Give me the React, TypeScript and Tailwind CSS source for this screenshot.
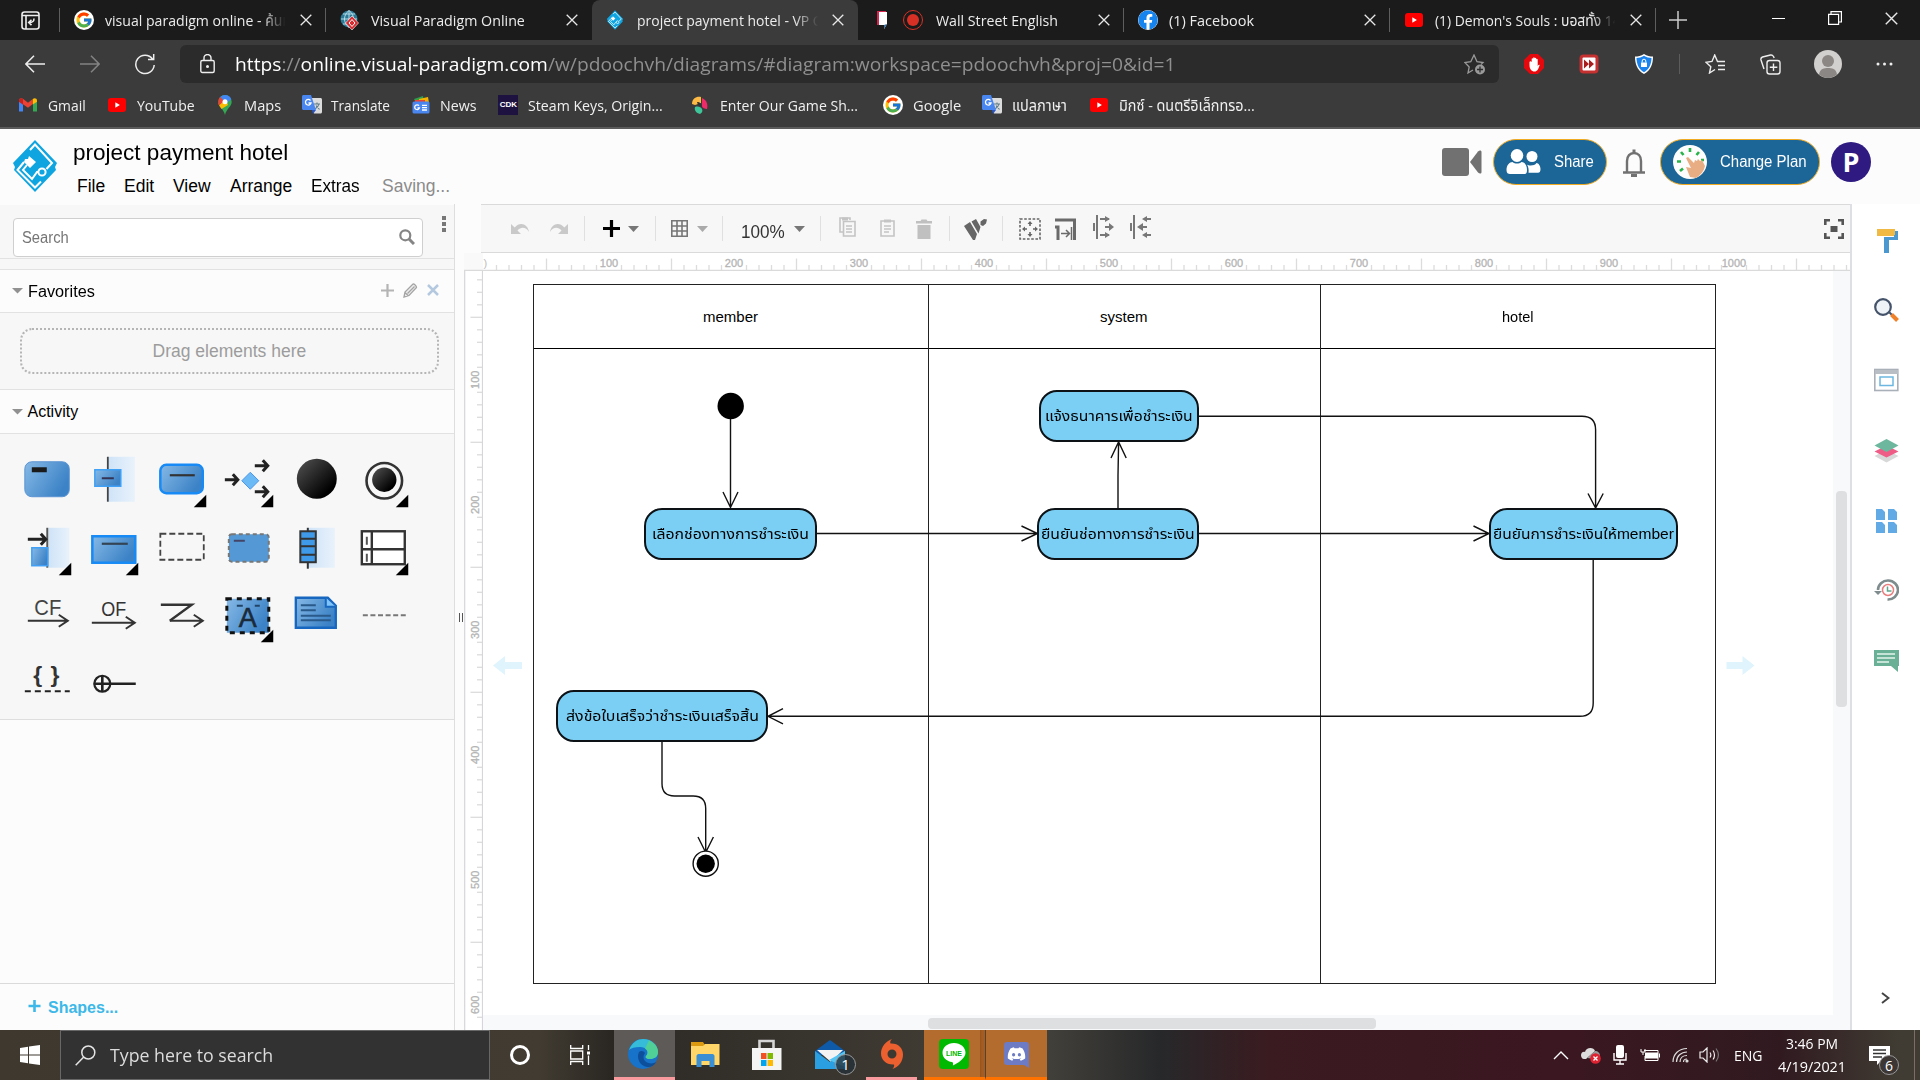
import { useLayoutEffect, useRef, useState, type ReactNode } from 'react';
import { FcGoogle } from 'react-icons/fc';
import { FaFacebook, FaDiscord } from 'react-icons/fa';

const ui = "font-['Open_Sans','Noto_Sans_Thai','Noto_Sans',sans-serif]";
const arial = "font-['Liberation_Sans','Noto_Sans_Thai',sans-serif]";

/* One line of text condensed or widened to fill a given width. */
function Label({ w, className = '', children }: { w: number; className?: string; children: ReactNode }) {
  const ref = useRef<HTMLSpanElement>(null);
  const [scale, setScale] = useState(1);
  useLayoutEffect(() => {
    if (ref.current) setScale(w / ref.current.offsetWidth);
  }, [w]);
  return (
    <span className={'block shrink-0 whitespace-nowrap ' + className} style={{ width: w }}>
      <span ref={ref} className="inline-block origin-left whitespace-pre" style={{ transform: `scaleX(${scale})` }}>
        {children}
      </span>
    </span>
  );
}

/* ---------- small brand marks ---------- */

const GoogleMark = () => (
  <span className="flex size-5 items-center justify-center rounded-full bg-white"><FcGoogle size={18} /></span>
);

const YouTubeMark = () => (
  <svg width="20" height="20" viewBox="0 0 20 20">
    <rect x="1" y="3" width="18" height="14" rx="3" fill="#f00" />
    <path d="M8.3 7.2v5.6l4.6-2.8z" fill="#fff" />
  </svg>
);

const GmailMark = () => (
  <svg width="20" height="20" viewBox="0 0 20 20">
    <path d="M1 5v11.5h4V9z" fill="#4285f4" />
    <path d="M19 5v11.5h-4V9z" fill="#34a853" />
    <path d="M1 5.5C1 3 4 2.500 5.200 4L10 7.700 14.800 4v5L10 12.700 1 6.500z" fill="#ea4335" />
    <path d="M14.800 4C16.500 2.500 19 3.500 19 5.500v1.300L14.800 9.500z" fill="#fbbc04" />
    <path d="M1 5.500v1.300L5 9.700V4C3.500 2.700 1 3.500 1 5.500z" fill="#c5221f" />
  </svg>
);

const MapsMark = () => (
  <svg width="20" height="22" viewBox="0 0 20 22">
    <path d="M10 1a6.700 6.700 0 0 0-6.700 6.700c0 4.800 5.200 7 6.700 13.300 1.500-6.300 6.700-8.500 6.700-13.300A6.700 6.700 0 0 0 10 1z" fill="#34a853" />
    <path d="M3.600 9.500 10 3l3 8-6.500 4C5 13 4 11.500 3.600 9.500z" fill="#fbbc04" />
    <path d="M10 1a6.700 6.700 0 0 1 6.200 4.200L11 10 5.200 3A6.700 6.700 0 0 1 10 1z" fill="#4285f4" />
    <path d="M5.200 3 9 7l-5 4.500C3 9 3 5 5.200 3z" fill="#ea4335" />
    <circle cx="10" cy="7.700" r="2.500" fill="#fff" />
  </svg>
);

const TranslateMark = () => (
  <svg width="20" height="21" viewBox="0 0 20 21">
    <path d="M8 4h10.500c.8 0 1.500.7 1.500 1.500V18c0 .8-.7 1.500-1.500 1.500H12z" fill="#dcdcdc" />
    <path d="M12 10h6M15 8.500V10M17 10c-.5 2.500-2.500 4-4 5M14 11.500l3.500 4" stroke="#5f7c8a" strokeWidth="1.100" fill="none" />
    <path d="M1.500 1H9l5 15H1.500C.7 16 0 15.300 0 14.500v-12C0 1.700.7 1 1.500 1z" fill="#4a86f0" />
    <path d="M10 16h4l-3 4z" fill="#2a56c6" />
    <path d="M8.500 6.500A2.800 2.800 0 1 0 9 9H6.500" stroke="#fff" strokeWidth="1.300" fill="none" />
  </svg>
);

const NewsMark = () => (
  <svg width="20" height="20" viewBox="0 0 20 20">
    <path d="M3 4 12 1l1 5H4z" fill="#2e9e4f" />
    <path d="M8 4 17 2l1 6H8z" fill="#f4b400" />
    <path d="M4 5h10v5H4z" fill="#ea4335" />
    <rect x="1.500" y="6.500" width="17" height="12" rx="1.500" fill="#4a86f0" />
    <path d="M8 10.700a2.400 2.400 0 1 0 .4 2.200H6.500M11 10.300h5M11 12.700h5M11 15h5" stroke="#fff" strokeWidth="1.300" fill="none" />
  </svg>
);

const CdkMark = () => (
  <span className="flex size-5 items-center justify-center bg-[#1e1340] font-['Liberation_Sans',sans-serif] text-[8px] font-bold text-white">CDK</span>
);

const GameMark = () => (
  <svg width="20" height="20" viewBox="0 0 20 20">
    <path d="M2 9c0-6 5-8 9-7v6L5 10z" fill="#fdbb45" />
    <path d="M12 3c5 2 6 7 5 11-2 0-5-1-5-3z" fill="#ee2a6a" />
    <path d="M5 12c3-1 6 0 7 2s0 4-2 5c-4-1-6-4-5-7z" fill="#3fc59a" />
    <path d="M7 7c3 0 5 2 5 5l-4-2z" fill="#333" />
  </svg>
);

function VpDiamond({ w, h }: { w: number; h: number }) {
  return (
    <svg width={w} height={h} viewBox="0 0 46 54">
      <path d="M23 1 45 24l-2 4 1 3L23 53 2 31l1-3-2-4z" fill="#0fa5e0" />
      <path d="M18 11 23 5.500 40 24l-5.500 6" stroke="#fff" strokeWidth="2" fill="none" />
      <path d="M12 23 5.500 31 23 48.500 29 42.500M15 26l-4 5 9 9 5-7h3" stroke="#fff" strokeWidth="2" fill="none" />
      <path d="m17 17 7 6-6 6-6-6 1-3h3z" fill="#fff" />
      <circle cx="30" cy="33" r="3.600" fill="#0fa5e0" stroke="#fff" strokeWidth="2" />
    </svg>
  );
}

const GlobeMark = () => (
  <svg width="20" height="20" viewBox="0 0 20 20">
    <circle cx="9" cy="9" r="8.500" fill="#2c7a96" />
    <path d="M1 9h16M9 .5v17M3 4h12M3 14h12M9 .5C3 5 3 13 9 17.500M9 .5c6 4.500 6 12.500 0 17" stroke="#bfe3ee" strokeWidth=".9" fill="none" />
    <path d="m12 6 6.500 7L12 20l-6.500-7z" fill="#d52a2f" stroke="#fff" strokeWidth=".6" />
    <path d="m12 9.500 3 3.500-3 3.500L9 13z" stroke="#fff" fill="none" />
  </svg>
);

/* ---------- browser chrome ---------- */

const Cross = ({ s = 12 }: { s?: number }) => (
  <svg width={s} height={s} viewBox="0 0 12 12"><path d="m.7.7 10.600 10.600M11.300.7.7 11.300" stroke="#e8e8e8" strokeWidth="1.300" /></svg>
);

type TabProps = { icon: ReactNode; title: string; w: number; active?: boolean; divider?: boolean; fade?: boolean };

function Tab({ icon, title, w, active, divider, fade }: TabProps) {
  return (
    <div className={'relative flex h-10 w-[266px] shrink-0 items-center pl-3.5 ' + (active ? 'rounded-t-lg bg-[#3b3b3b]' : '')}>
      <span className="flex h-5 min-w-5 shrink-0 items-center">{icon}</span>
      <span className="ml-[11px] flex-1 overflow-hidden">
        <Label w={w} className={'text-[15px] leading-[39px] text-[#ececec] ' + (fade ? '[mask-image:linear-gradient(90deg,#000_84%,transparent_97%)]' : '')}>{title}</Label>
      </span>
      <span className="mr-3.5 shrink-0"><Cross /></span>
      {divider && <span className="absolute top-2 right-0 h-6 w-px bg-[#5e5e5e]" />}
    </div>
  );
}

function TabStrip() {
  return (
    <div className="flex h-10 bg-[#1b1b1b]">
      <div className="flex w-[60px] items-center pl-[21px]">
        <svg width="19" height="19" viewBox="0 0 19 19" fill="none" stroke="#eee" strokeWidth="1.600">
          <rect x="1" y="1" width="17" height="17" rx="2.500" /><path d="M1 4.500h17M5 4.500V18M13 7.500c0 3-1 4-5 4M10.500 8.700 7.700 11.500l2.800 2.600" />
        </svg>
      </div>
      <span className="mt-2 -ml-px h-6 w-px bg-[#5e5e5e]" />
      <Tab icon={<GoogleMark />} title="visual paradigm online - ค้นห" w={186} divider fade />
      <Tab icon={<GlobeMark />} title="Visual Paradigm Online" w={154} />
      <Tab icon={<VpDiamond w={18} h={20} />} title="project payment hotel - VP O" w={187} active fade />
      <Tab
        icon={
          <span className="flex w-[53px] items-center justify-between pr-0.5 pl-1">
            <svg width="12" height="20" viewBox="0 0 12 20"><path d="M1 1h9v14H1z" fill="#d6264f" /><path d="M3 2h8v12l-3 5v-4H3z" fill="#fff" /><path d="m8 15 3-1-3 5z" fill="#3b6fa0" /></svg>
            <span className="flex size-5 items-center justify-center rounded-full border-[1.500px] border-[#d93025]"><span className="size-3 rounded-full bg-[#d93025]" /></span>
          </span>
        }
        title="Wall Street English" w={122} divider
      />
      <Tab icon={<FaFacebook size={20} className="rounded-full bg-white text-[#1584ee]" />} title="(1) Facebook" w={85} divider />
      <Tab icon={<YouTubeMark />} title="(1) Demon's Souls : บอสทั้ง 14" w={186} divider fade />
      <svg className="mt-[11px] ml-[13px]" width="18" height="18" viewBox="0 0 18 18"><path d="M9 0v18M0 9h18" stroke="#ccc" strokeWidth="1.500" /></svg>
      <div className="ml-auto flex items-center gap-[43px] pr-[22px] pb-1">
        <span className="h-px w-[13px] bg-white" />
        <svg width="14" height="14" viewBox="0 0 14 14" fill="none" stroke="#fff" strokeWidth="1.200"><path d="M.6 3.400h10v10h-10zM3 3V.6h10.400V11H11" /></svg>
        <Cross s={13} />
      </div>
    </div>
  );
}

function AddressRow() {
  return (
    <div className="flex h-12 items-center pr-[27px]">
      <div className="flex w-[180px] items-center pl-[25px]">
        <svg width="20" height="18" viewBox="0 0 20 18" fill="none" stroke="#eee" strokeWidth="1.500"><path d="M20 9H1M9 .7.9 9 9 17.300" /></svg>
        <svg className="ml-[35px]" width="20" height="18" viewBox="0 0 20 18" fill="none" stroke="#838383" strokeWidth="1.500"><path d="M0 9h19M11 .7 19.100 9 11 17.300" /></svg>
        <svg className="ml-[35px]" width="20" height="21" viewBox="0 0 20 21" fill="none" stroke="#eee" strokeWidth="1.500"><path d="M17.500 5A9.200 9.200 0 1 0 19.200 11M18.700 0v5.500H13" /></svg>
      </div>
      <div className="flex h-[38px] w-[1319px] items-center rounded-md bg-[#2b2b2b] pr-[13px] pl-5">
        <svg width="15" height="20" viewBox="0 0 15 20" fill="none" stroke="#eee" strokeWidth="1.400"><rect x=".8" y="6.500" width="13.400" height="12" rx="1.500" /><path d="M4 6.500V4a3.500 3.500 0 0 1 7 0v2.500" /><circle cx="7.500" cy="12.500" r=".8" fill="#eee" /></svg>
        <Label w={941} className="ml-5 text-[19px] leading-[38px] text-[#8f8f8f]">
          <span className="text-white">https</span>://<span className="text-white">online.visual-paradigm.com</span>/w/pdoochvh/diagrams/#diagram:workspace=pdoochvh&amp;proj=0&amp;id=1
        </Label>
        <svg className="ml-auto" width="22" height="21" viewBox="0 0 22 21" fill="none" stroke="#9a9a9a" strokeWidth="1.300"><path d="M9 16 4 19l1.200-6L.8 8.500l6-.8L10 1l3 6.700 6 .8-2 2" /><circle cx="16" cy="15.500" r="5" fill="#9a9a9a" stroke="none" /><path d="M16 12.500v6M13 15.500h6" stroke="#2b2b2b" /></svg>
      </div>
      <div className="ml-[25px] flex items-center">
        <svg width="20" height="20" viewBox="0 0 20 20"><path d="M6 0h8l6 6v8l-6 6H6l-6-6V6z" fill="#e5090d" /><path d="M5.500 8v3c0 4 2 6.500 5 6.500 3 0 3.700-2.500 4.500-4.500l.7-2c-.7-.5-1.300 0-2 1V5.500c-.5-1-1.200-.8-1.500 0V4.300c-.5-.8-1.200-.8-1.500 0v-.5c-.5-.8-1.200-.8-1.500 0v1C8.700 4 8 4 7.700 4.800V8c-.7-1-1.800-1-2.200 0z" fill="#fff" /></svg>
        <svg className="ml-[35px]" width="20" height="20" viewBox="0 0 20 20"><rect x=".5" y=".5" width="19" height="19" rx="4" fill="#c53030" /><rect x="3.500" y="3.500" width="13" height="13" rx="1" fill="#fff" /><path d="M5 5.500 10 10l-5 4.500zm5 0 5 4.500-5 4.500z" fill="#a81d1d" /></svg>
        <svg className="ml-[35px]" width="20" height="20" viewBox="0 0 20 20"><path d="M10 0c3 2 6 2.500 9 2.500C19 10 17 16 10 20 3 16 1 10 1 2.500 4 2.500 7 2 10 0z" fill="#fff" /><path d="M10 1.700c2.500 1.500 5 2.200 7.500 2.300-.2 6-2 11-7.500 14.300C4.500 15 2.700 10 2.500 4 5 3.900 7.500 3.200 10 1.700z" fill="#1b83ee" /><rect x="7" y="8.500" width="6" height="4.500" fill="#fff" /><path d="M8.200 8.500V7a1.800 1.800 0 0 1 3.600 0v1.500" stroke="#fff" fill="none" /></svg>
        <span className="ml-[25px] h-5 w-px bg-[#5c5c5c]" />
        <svg className="ml-[25px]" width="21" height="20" viewBox="0 0 21 20" fill="none" stroke="#eee" strokeWidth="1.400"><path d="M10 15.500 4.500 19l1.300-6.300L1 8.200l6-.8L9.700 1l2.800 6.500H20M13 11.500h7M13 15.500h7" /></svg>
        <svg className="ml-[34px]" width="21" height="21" viewBox="0 0 21 21" fill="none" stroke="#eee" strokeWidth="1.400"><rect x="7" y="6.500" width="13" height="13.500" rx="2.500" /><path d="M13.500 9.500v7.500M9.800 13.200h7.500M4 15 1 6c-.4-1.500.3-2.500 1.500-3l8-2c1.500-.3 2.300.3 3 1.500l.7 1.500" /></svg>
        <svg className="ml-[33px]" width="28" height="28" viewBox="0 0 28 28"><circle cx="14" cy="14" r="14" fill="#d2d0ce" /><circle cx="14" cy="11" r="6" fill="#8a8784" /><path d="M5 24.500C6 18.500 10 18 14 18s8 .5 9 6.500c-5 4.500-13 4.500-18 0z" fill="#8a8784" /></svg>
        <svg className="ml-[34px]" width="17" height="4" viewBox="0 0 17 4" fill="#eee"><circle cx="2" cy="2" r="1.500" /><circle cx="8.500" cy="2" r="1.500" /><circle cx="15" cy="2" r="1.500" /></svg>
      </div>
    </div>
  );
}

const bookmarks: { icon: ReactNode; text: string; w: number; slot: string }[] = [
  { icon: <GmailMark />, text: 'Gmail', w: 38, slot: 'w-[38px]' },
  { icon: <YouTubeMark />, text: 'YouTube', w: 58, slot: 'w-[57px]' },
  { icon: <MapsMark />, text: 'Maps', w: 37, slot: 'w-[36px]' },
  { icon: <TranslateMark />, text: 'Translate', w: 59, slot: 'w-[58px]' },
  { icon: <NewsMark />, text: 'News', w: 37, slot: 'w-[37px]' },
  { icon: <CdkMark />, text: 'Steam Keys, Origin...', w: 135, slot: 'w-[141px]' },
  { icon: <GameMark />, text: 'Enter Our Game Sh...', w: 138, slot: 'w-[142px]' },
  { icon: <GoogleMark />, text: 'Google', w: 48, slot: 'w-[48px]' },
  { icon: <TranslateMark />, text: 'แปลภาษา', w: 55, slot: 'w-[56px]' },
  { icon: <YouTubeMark />, text: 'มิกซ์ - ดนตรีอิเล็กทรอ...', w: 136, slot: 'w-[136px]' },
];

function BookmarkBar() {
  return (
    <div className="flex h-[39px] items-center gap-[21.200px] pb-1.5 pl-[18px]">
      {bookmarks.map((b, i) => (
        <div key={i} className="flex items-center gap-[9.700px]">
          <span className="flex w-5 justify-center">{b.icon}</span>
          <div className={b.slot}><Label w={b.w} className="text-[15px] leading-5 text-[#f0f0f0]">{b.text}</Label></div>
        </div>
      ))}
    </div>
  );
}

/* ---------- application header ---------- */

const menu = [
  { t: 'File', w: 28 }, { t: 'Edit', w: 30 }, { t: 'View', w: 38 }, { t: 'Arrange', w: 62 }, { t: 'Extras', w: 49 },
];

function AppHeader() {
  return (
    <header className={'flex h-[75px] bg-[#fcfcfc] ' + arial}>
      <div className="pt-2.5 pl-3"><VpDiamond w={46} h={54} /></div>
      <div className="ml-[14.500px] flex flex-col">
        <Label w={215} className="mt-[9px] text-[22px] leading-[30px] text-black">project payment hotel</Label>
        <div className="mt-1.5 flex gap-[19px] pl-[4.500px] text-[17.500px] leading-6 text-black">
          {menu.map((m) => <Label key={m.t} w={m.w}>{m.t}</Label>)}
          <Label w={68} className="ml-[3px] text-[#8b8b8b]">Saving...</Label>
        </div>
      </div>
      <div className="ml-auto flex h-[66px] items-center pr-[49px] text-base text-white">
        <svg width="40" height="28" viewBox="0 0 40 28" fill="#717171"><rect x="0" y="0" width="27" height="28" rx="3" /><path d="m28 14 8-10.500c1.500-1.500 3.500-1.500 3.500.5v20c0 2-2 2-3.500.5z" /></svg>
        <div className="ml-[11px] flex h-[46px] w-[114px] items-center rounded-full border border-[#f0ab23] bg-[#1b6597] pl-3">
          <svg width="35" height="26" viewBox="0 0 35 26" fill="#fff"><ellipse cx="11" cy="6.500" rx="6.300" ry="6.500" /><path d="M.5 21c0-5 3-8 6-8 2.500 2 6.500 2 9 0 3 0 5.500 3 5.500 8 0 4-1.500 4-3 4H4c-2 0-3.500-1-3.500-4z" /><circle cx="26" cy="7.500" r="5.500" /><path d="M21 15.500c2 1.500 7.500 1.500 9.500-1.500 2 0 4 3 4 6 0 3-1 3.700-2.500 3.700H22.500c.5-3-.2-6-1.500-8.200z" /></svg>
          <Label w={40} className="ml-[13px]">Share</Label>
        </div>
        <svg className="ml-[15px]" width="24" height="29" viewBox="0 0 24 29" fill="none" stroke="#717171" strokeWidth="2.400"><path d="M5 24V13c0-5 3-8 7-8s7 3 7 8v11M1 24.500h22" /><path d="M10.500 3h3M9 27.500h6" strokeWidth="3" /></svg>
        <div className="ml-3.5 flex h-[46px] w-40 items-center rounded-full border border-[#f0ab23] bg-[#1b6597] pl-3">
          <svg width="34" height="34" viewBox="0 0 34 34"><circle cx="17" cy="17" r="17" fill="#fdfdfd" /><g stroke="#27b24a" strokeWidth="2.600"><path d="M17 3v4M8 7l2.500 3M26 7l-2.500 3M4 16.500h4M7 26l3-2.500M28 15h3" /></g><path d="m13 13 2-1 6 6 1-3 2 1 1-2 2 2 2-1 3 6c-1 5-4 9-9 12l-6-1-4-10 5 1z" fill="#e9ad83" /></svg>
          <Label w={87} className="ml-[12.500px]">Change Plan</Label>
        </div>
        <div className="ml-[11px] flex size-10 items-center justify-center rounded-full bg-[#2e1a80] font-['Open_Sans',sans-serif] text-[27px] font-bold">P</div>
      </div>
    </header>
  );
}

/* ---------- shape palette ---------- */

const Arrow = ({ x1, x2, y }: { x1: number; x2: number; y: number }) => (
  <path d={`M${x1} ${y}H${x2 - 1}M${x2 - 6} ${y - 5.5}l5 5.500-5 5.500`} stroke="#222" strokeWidth="3" fill="none" />
);
const ThinArrow = ({ x1, x2, y }: { x1: number; x2: number; y: number }) => (
  <path d={`M${x1} ${y}H${x2}M${x2 - 9} ${y - 6}l9 6-9 6`} stroke="#333" strokeWidth="2" fill="none" />
);

const shapes: { more?: boolean; art: ReactNode }[] = [
  { art: <><rect x="-22" y="-18" width="44.500" height="35" rx="7" fill="url(#blue)" stroke="#5a94d2" /><path d="M-15-10H0" stroke="#1a1a1a" strokeWidth="5" /></> },
  { art: <><rect x="-6" y="-23" width="27" height="45" fill="url(#pale)" /><path d="M-6-23v45" stroke="#444" strokeWidth="1.800" /><rect x="-19" y="-10" width="26" height="16.500" fill="url(#blue)" stroke="#3fa0f5" strokeWidth="1.500" /><path d="M-12-1.500H0" stroke="#335" strokeWidth="2" /></> },
  { more: true, art: <><rect x="-21.500" y="-15" width="42.500" height="28.500" rx="6" fill="url(#blue)" stroke="#178af5" strokeWidth="2.500" /><path d="M-12-4.500h25" stroke="#333" strokeWidth="2.200" /></> },
  { more: true, art: <><Arrow x1={-24} x2={-10} y={0} /><Arrow x1={6} x2={20} y={-14} /><Arrow x1={6} x2={20} y={12} /><path d="m1.500-7.500 8.500 8.500-8.500 8.500L-7 1z" fill="#6cbaf5" stroke="#4a94e8" /></> },
  { art: <circle cx="0" cy="-1" r="20" fill="url(#ball)" /> },
  { more: true, art: <><circle cx=".5" cy="1" r="17.800" fill="#f7f7f7" stroke="#333" strokeWidth="2.600" /><circle cx=".5" cy="0" r="12.200" fill="url(#ball)" /></> },
  { more: true, art: <><rect x="2" y="-20" width="20.500" height="40" fill="url(#pale)" /><path d="M.5-20v40" stroke="#555" strokeWidth="2" /><rect x="-15" y="0" width="16" height="18" fill="url(#blue)" stroke="#3fa0f5" strokeWidth="1.500" /><Arrow x1={-19} x2={0} y={-8.500} /></> },
  { more: true, art: <><rect x="-21.500" y="-11.500" width="43" height="26.500" fill="url(#blue)" stroke="#178af5" strokeWidth="2.500" /><path d="M-12-4h26" stroke="#345" strokeWidth="2.200" /></> },
  { art: <rect x="-21.500" y="-14" width="43.500" height="26" fill="none" stroke="#444" strokeWidth="1.800" strokeDasharray="6 3" /> },
  { art: <><rect x="-20" y="-13.500" width="40" height="27.500" rx="3" fill="#5499d5" stroke="#777" strokeWidth="2" strokeDasharray="4 3" /><path d="M-15-7h11" stroke="#446" strokeWidth="2" /></> },
  { art: <><rect x="-9" y="-20" width="27" height="40" fill="url(#pale)" /><path d="M-9-20v41" stroke="#333" strokeWidth="2" /><rect x="-16.500" y="-16.500" width="15.500" height="31" fill="#3f9bea" stroke="#333" strokeWidth="2" /><path d="M-16-9h15M-16-1.500h15M-16 7h15" stroke="#333" strokeWidth="1.800" /></> },
  { more: true, art: <><rect x="-22" y="-16.500" width="43" height="33" fill="#fff" stroke="#333" strokeWidth="2.400" /><path d="M-22 1.500h43M-12-16v33" stroke="#333" strokeWidth="2.400" /><path d="M-17-11v8M-17 6v8" stroke="#555" strokeWidth="2" /></> },
  { art: <><text x="1" y="0" textAnchor="middle" fontSize="22" textLength="27" lengthAdjust="spacingAndGlyphs" fontFamily="Liberation Sans" fill="#444">CF</text><ThinArrow x1={-19} x2={21} y={6} /></> },
  { art: <><text x="0" y="1" textAnchor="middle" fontSize="20" textLength="25" lengthAdjust="spacingAndGlyphs" fontFamily="Liberation Sans" fill="#333">OF</text><ThinArrow x1={-22} x2={21} y={8} /></> },
  { art: <><path d="M-21-10h31L-12 6" stroke="#333" strokeWidth="2.400" fill="none" /><ThinArrow x1={-12} x2={21} y={6} /></> },
  { more: true, art: <><rect x="-22" y="-16" width="42" height="34" fill="url(#blue)" stroke="#111" strokeWidth="3" strokeDasharray="5 5" /><path d="M-12-9h6M6-9h5" stroke="#246" strokeWidth="2" /><text x="-1" y="12" textAnchor="middle" fontSize="27" fontFamily="Liberation Sans" fill="#1a2a3a" stroke="#1a2a3a" strokeWidth=".6">A</text></> },
  { art: <><path d="M-21-17H11l8 8v22h-40z" fill="url(#blue)" stroke="#1767c0" strokeWidth="2.400" /><path d="M9-17v9h10" stroke="#1767c0" strokeWidth="2" fill="#7fc4fa" /><path d="M-16-9.500H-1M-16-4.500H-1M-16 1h30M-16 5.500h30" stroke="#2a5a8a" strokeWidth="1.800" /></> },
  { art: <path d="M-21 .5h43" stroke="#777" strokeWidth="1.800" strokeDasharray="5 2.600" /> },
  { art: <><text x="0" y="-1" textAnchor="middle" fontSize="23" fontFamily="Liberation Sans" fontWeight="bold" fill="#333" letterSpacing="1">{'{ }'}</text><path d="M-22 8.500h45" stroke="#222" strokeWidth="2.200" strokeDasharray="6 4" /></> },
  { art: <><circle cx="-11.500" cy="1" r="8" fill="none" stroke="#222" strokeWidth="2.200" /><path d="M-20 1h42M-11.500-7v16" stroke="#222" strokeWidth="2.600" /></> },
];

function Palette() {
  return (
    <div className="grid h-[285px] grid-cols-[repeat(6,67.600px)] content-start pt-3 pl-[12.500px]">
      <svg className="absolute size-0">
        <defs>
          <linearGradient id="blue" x1="0" y1="0" x2="1" y2=".5"><stop offset="0" stopColor="#86b9e6" /><stop offset="1" stopColor="#3b82c6" /></linearGradient>
          <linearGradient id="pale"><stop offset="0" stopColor="#cfe3f8" /><stop offset="1" stopColor="#e8f2fb" /></linearGradient>
          <linearGradient id="ball" x1="0" y1="0" x2="1" y2="1"><stop offset="0" stopColor="#555" /><stop offset=".8" stopColor="#000" /></linearGradient>
        </defs>
      </svg>
      {shapes.map((s, i) => (
        <svg key={i} className="h-[67.500px] w-[67.600px]" viewBox="-33.800 -33.800 67.600 67.600">
          {s.art}
          {s.more && <path d="M24.500 15v12.500H12z" fill="#000" />}
        </svg>
      ))}
    </div>
  );
}

function SectionTitle({ text, w, height, tools }: { text: string; w: number; height: string; tools?: boolean }) {
  return (
    <div className={'flex items-center border-y border-[#e2e2e2] bg-[#fcfcfc] pr-[15px] pl-3 ' + height}>
      <svg width="11" height="6" viewBox="0 0 11 6" fill="#919191"><path d="M0 0h11L5.500 5.500z" /></svg>
      <Label w={w} className="mt-px ml-[4.500px] text-base text-black">{text}</Label>
      {tools && (
        <div className="mb-0.5 ml-auto flex items-center gap-[9px]">
          <svg width="13" height="13" viewBox="0 0 13 13"><path d="M6.500 0v13M0 6.500h13" stroke="#b4b4b4" strokeWidth="2.200" /></svg>
          <svg width="15" height="15" viewBox="0 0 15 15" fill="#eee" stroke="#a4a4a4" strokeWidth="1.300"><path d="m1 14 1-5 8-8c1-.5 3.500 2 3.500 3.500L6 12.500zM2 9.500 5.500 13M4.500 10.500l7-7" /></svg>
          <svg width="12" height="12" viewBox="0 0 12 12"><path d="m1 1 10 10M11 1 1 11" stroke="#b4c8df" strokeWidth="2.500" /></svg>
        </div>
      )}
    </div>
  );
}

function Sidebar() {
  return (
    <aside className={'flex w-[455px] shrink-0 flex-col border-r border-[#dedede] bg-[#f7f7f7] ' + arial}>
      <div className="flex h-[55px] border-t border-b border-t-[#fcfcfc] border-b-[#e2e2e2] pt-[13px] pl-[13px]">
        <div className="flex h-[39px] w-[410px] items-center rounded border border-[#cfcfcf] bg-white pr-[7px] pl-2">
          <Label w={47} className="text-base text-[#757575]">Search</Label>
          <svg className="mb-0.5 ml-auto" width="16" height="16" viewBox="0 0 16 16" fill="none" stroke="#858585"><circle cx="6.300" cy="6.300" r="5" strokeWidth="2.200" /><path d="m10 10 5 5" strokeWidth="3" /></svg>
        </div>
        <div className="-mt-0.5 ml-[19px] flex flex-col gap-0.5">
          <span className="size-1 bg-[#777]" /><span className="size-1 bg-[#777]" /><span className="size-1 bg-[#777]" />
        </div>
      </div>
      <div className="h-2.5" />
      <SectionTitle text="Favorites" w={67} height="h-11" tools />
      <div className="h-[76px] pt-[15px] pl-5">
        <div className="flex h-[46px] w-[419px] items-center justify-center rounded-xl border-2 border-dotted border-[#b5b5b5]">
          <Label w={154} className="text-[17.500px] text-[#9c9c9c]">Drag elements here</Label>
        </div>
      </div>
      <SectionTitle text="Activity" w={51} height="h-[45px]" />
      <Palette />
      <div className="flex flex-1 flex-col justify-end border-t border-[#dedede] bg-[#fcfcfc]">
        <div className="flex h-[47px] items-center border-t border-[#dadada] pl-7 font-bold text-[#3db8e8]">
          <svg className="mb-0.5" width="13" height="12" viewBox="0 0 13 12"><path d="M6.500 0v12M.5 6h12" stroke="#3db8e8" strokeWidth="2.600" /></svg>
          <Label w={70} className="mt-0.5 ml-[7px] text-base">Shapes...</Label>
        </div>
      </div>
    </aside>
  );
}

/* ---------- editor toolbar ---------- */

const Sep = ({ className }: { className: string }) => <span className={'h-[25px] w-px shrink-0 bg-[#e0e0e0] ' + className} />;
const Caret = ({ className, c = '#777' }: { className: string; c?: string }) => (
  <svg className={'shrink-0 ' + className} width="11" height="6" viewBox="0 0 11 6" fill={c}><path d="M0 0h11L5.500 6z" /></svg>
);

function EditorToolbar() {
  return (
    <div className={'ml-[17px] flex h-[49px] items-center border-y border-[#dadada] bg-[#f7f7f7] pl-[30px] ' + arial}>
      <svg width="19" height="12" viewBox="0 0 19 12" fill="#c9c9c9"><path d="M0 1v10h10L6.500 7.500C10 3.500 15 4 18 9 17 1 9-2 3.700 4.500z" /></svg>
      <svg className="ml-[19px]" width="19" height="12" viewBox="0 0 19 12" fill="#c9c9c9"><path d="M19 1v10H9l3.500-3.500C9 3.500 4 4 1 9 2 1 10-2 15.300 4.500z" /></svg>
      <Sep className="ml-4" />
      <svg className="ml-[17.500px]" width="17" height="17" viewBox="0 0 17 17"><path d="M8.500 0v17M0 8.500h17" stroke="#000" strokeWidth="3.200" /></svg>
      <Caret className="ml-2" />
      <Sep className="ml-4" />
      <svg className="ml-[15.500px]" width="17" height="17" viewBox="0 0 17 17" fill="none" stroke="#777" strokeWidth="1.600"><path d="M.8.8h15.400v15.400H.8zM.8 6h15.400M.8 11h15.400M6 .8v15.400M11 .8v15.400" /></svg>
      <Caret className="ml-[9px]" c="#aaa" />
      <Sep className="ml-3.5" />
      <Label w={44} className="mt-2 ml-[18px] text-[17.500px] text-[#333]">100%</Label>
      <Caret className="ml-[8.500px]" />
      <Sep className="ml-[15px]" />
      <svg className="mb-1 ml-[18px]" width="17" height="20" viewBox="0 0 17 20" fill="none" stroke="#c4c4c4" strokeWidth="1.600"><path d="M4 15H1V1h10v2M4.500 4.500H16V19H4.500zM7 9h6M7 12h6M7 15h6" /><path d="M3 2h6" strokeWidth="3" /></svg>
      <svg className="mb-0.5 ml-6" width="15" height="18" viewBox="0 0 15 18" fill="none" stroke="#c4c4c4" strokeWidth="1.600"><path d="M1 2h13v15H1zM4 7h7M4 10h7M4 13h5" /><path d="M4 2h7" strokeWidth="3" /></svg>
      <svg className="ml-5" width="18" height="20" viewBox="0 0 18 20" fill="#c0c0c0"><path d="M1 2h4.500L6.500.5h5l1 1.500H17v2.500H1zM2.500 6h13v14h-13z" /></svg>
      <Sep className="ml-4" />
      <svg className="ml-3.5" width="23" height="22" viewBox="0 0 23 22" fill="#666"><path d="m0 8 6-4 7 12-2 6H9zM7.500 3.500 12 1l4.500 8-2 6.500zM16.500 3.500 20 1l3 .5-1 4-3 2.500-2.500-1z" /></svg>
      <Sep className="ml-[15px]" />
      <svg className="ml-4" width="22" height="22" viewBox="0 0 22 22" fill="none" stroke="#666" strokeWidth="1.600"><rect x="1" y="1" width="20" height="20" strokeDasharray="2.600 1.600" /><path d="M11 4v4M11 14v4M4 11h4M14 11h4" strokeWidth="1.600" /><path d="M8.500 6 11 3l2.500 3zM8.500 16l2.500 3 2.500-3zM6 8.500 3 11l3 2.500zM16 8.500l3 2.500-3 2.500z" fill="#666" stroke="none" /></svg>
      <svg className="ml-3.5" width="21" height="22" viewBox="0 0 21 22" fill="none" stroke="#6a6a6a"><path d="M0 2h19.500v20M0 9h3v13" strokeWidth="3" /><path d="M16.500 9v13M6 15.500h9M11 12l3.500 3.500L11 19" strokeWidth="1.500" /></svg>
      <svg className="mb-1 ml-[17px]" width="22" height="24" viewBox="0 0 22 24" fill="none" stroke="#777" strokeWidth="2"><path d="M4 0v24M1 8v8M12 12h5M7 4h9M7 20h9" /><path d="m16 8 5 4-5 4zM12 1l5 3-5 3zM12 17l5 3-5 3z" fill="#777" stroke="none" /></svg>
      <svg className="mb-1 ml-[15px]" width="22" height="24" viewBox="0 0 22 24" fill="none" stroke="#777" strokeWidth="2"><path d="M4 0v24M1 8v8M13 12h4M15 4h6M15 20h6" /><path d="m13 8-6 4 6 4zM17 1l-5 3 5 3zM17 17l-5 3 5 3z" fill="#777" stroke="none" /></svg>
      <svg className="mr-1.5 ml-auto" width="20" height="20" viewBox="0 0 20 20" fill="none" stroke="#555" strokeWidth="2.600"><path d="M1.300 6V1.300H6M14 1.300h4.700V6M18.700 14v4.700H14M6 18.700H1.300V14" /><path d="M6.500 10h7" strokeWidth="6" /></svg>
    </div>
  );
}

/* ---------- rulers ---------- */

const minor = (n: number) => Array.from({ length: n }, (_, i) => i).filter((i) => i % 10 !== 0);

function TopRuler() {
  return (
    <svg className="block" width="1386" height="18" viewBox="464 253 1386 18">
      <rect x="464" y="253" width="1386" height="18" fill="#fff" />
      <rect x="464" y="253" width="19" height="18" fill="#f9f9f9" />
      {minor(110).map((i) => (
        <path key={i} d={`M${484 + i * 12.5} ${i % 10 === 5 ? 258.5 : 265}V270`} stroke="#dcdcdc" strokeWidth="1.300" />
      ))}
      <path d="M464 270.500h1386" stroke="#dadada" strokeWidth="1.300" />
      <text x="483.500" y="266.500" fontSize="11" fill="#bdbdbd" fontFamily="Liberation Sans">)</text>
      {Array.from({ length: 10 }, (_, i) => (i + 1) * 100).map((v) => (
        <text key={v} x={484 + v * 1.25} y="266.500" textAnchor="middle" fontSize="11" fontFamily="Liberation Sans" fill="#b4b4b4" stroke="#b4b4b4" strokeWidth=".3">{v}</text>
      ))}
    </svg>
  );
}

function SideRuler() {
  return (
    <svg className="block shrink-0" width="19" height="759" viewBox="464 271 19 759">
      <rect x="464" y="271" width="19" height="759" fill="#fff" />
      {minor(62).filter((i) => i > 1).map((i) => (
        <path key={i} d={`M${i % 10 === 5 ? 470.5 : 477} ${254.8 + i * 12.5}H482`} stroke="#dcdcdc" strokeWidth="1.300" />
      ))}
      <path d="M464.700 271v759M482.500 271v759" stroke="#d6d6da" strokeWidth="1.200" />
      {[100, 200, 300, 400, 500, 600].map((v) => (
        <text key={v} transform={`translate(478.500 ${254.8 + v * 1.25}) rotate(-90)`} textAnchor="middle" fontSize="11" fontFamily="Liberation Sans" fill="#b4b4b4" stroke="#b4b4b4" strokeWidth=".3">{v}</text>
      ))}
    </svg>
  );
}

/* ---------- diagram ---------- */

const nodes = [
  { box: 'left-[555.500px] top-[119px] w-[160.500px]', text: 'แจ้งธนาคารเพื่อชำระเงิน', w: 148 },
  { box: 'left-[161px] top-[237px] w-[173px]', text: 'เลือกช่องทางการชำระเงิน', w: 157 },
  { box: 'left-[554px] top-[237px] w-[162px]', text: 'ยืนยันช่อทางการชำระเงิน', w: 154 },
  { box: 'left-[1005.500px] top-[237px] w-[189px]', text: 'ยืนยันการชำระเงินให้member', w: 181 },
  { box: 'left-[73px] top-[419px] w-[212px]', text: 'ส่งข้อใบเสร็จว่าชำระเงินเสร็จสิ้น', w: 193 },
];

function Diagram() {
  return (
    <div className="relative h-[744px] w-[1350px] bg-white">
      <div className="absolute top-[13px] left-[49.500px] grid h-[700px] w-[1183px] grid-cols-[395px_392px_1fr] border-[1.500px] border-[#222]">
        {['member', 'system', 'hotel'].map((t, i) => (
          <div key={t} className={i < 2 ? 'border-r border-[#222]' : ''}>
            <div className={'flex h-16 items-center justify-center border-b border-black text-[15px] text-black ' + arial}>
              <Label w={[55, 48, 32][i]} className="pt-0.5">{t}</Label>
            </div>
          </div>
        ))}
      </div>
      <svg className="absolute inset-0" width="1350" height="744" viewBox="483 271 1350 744" fill="none" stroke="#111" strokeWidth="1.400">
        <circle cx="730.700" cy="406" r="13.200" fill="#000" stroke="none" />
        <path d="M730.500 419v88M723 492l7.500 15.500L738 492" />
        <path d="M816 533.500h221M1021.500 526l16 7.500-16 7.500" />
        <path d="M1118 508v-32l.6-34M1111 458l7.600-16 7.600 16" />
        <path d="M1199 416.200h383q13.600 0 13.600 13.600V508M1588 493.500l7.600 14.500 7.600-14.500" />
        <path d="M1199 533.500h290M1473.500 526l15.500 7.500-15.500 7.500" />
        <path d="M1593.200 559v144q0 13.300-13.300 13.300H768M783 708.700l-15 7.600 15 7.600" />
        <path d="M662 741v42.500Q662 796 674.500 796h18.700q12.500 0 12.500 12.500V852M698 837l7.700 15.500 7.700-15.500" />
        <circle cx="705.700" cy="863.700" r="12.600" fill="#fff" />
        <circle cx="705.700" cy="863.700" r="9.200" fill="#000" stroke="none" />
        <path d="m493 665.500 12-9.500v6h17v7h-17v6zM1754.500 665.500l-12-9.500v6h-16v7h16v6z" fill="#dff4fd" stroke="none" />
      </svg>
      {nodes.map((n) => (
        <div key={n.text} className={'absolute flex h-[52px] items-center justify-center rounded-[18px] border-2 border-[#0c1216] bg-[#7bcff4] text-[14px] text-black ' + arial + ' ' + n.box}>
          <Label w={n.w} className="pt-px">{n.text}</Label>
        </div>
      ))}
    </div>
  );
}

function Editor() {
  return (
    <main className="flex w-[1386px] shrink-0 flex-col">
      <EditorToolbar />
      <TopRuler />
      <div className="flex h-[759px]">
        <SideRuler />
        <div className="flex flex-1 flex-col bg-[#f8f9fb]">
          <div className="flex">
            <Diagram />
            <div className="flex-1 pt-[220px] pl-[3px]"><div className="h-[216px] w-[11px] rounded-[4px] bg-[#dddfe1]" /></div>
          </div>
          <div className="mt-[3px] ml-[445px] h-[11px] w-[448px] rounded-[4px] bg-[#dddfe1]" />
        </div>
      </div>
    </main>
  );
}

/* ---------- right icon rail ---------- */

const rail: ReactNode[] = [
  <><path d="M3 1h18v7H3z" fill="#efb944" /><path d="M21 3h3v9h-9v13h-5V9h10V7h1z" fill="#4a98cf" /></>,
  <><circle cx="9" cy="9" r="7.800" fill="#eef3f8" stroke="#44536a" strokeWidth="2.200" /><path d="m15 14 3 3" stroke="#44536a" strokeWidth="2" /><path d="m17.500 16.500 6 6" stroke="#f0812b" strokeWidth="4" /></>,
  <><rect x=".8" y="1.500" width="23" height="21" fill="#fff" stroke="#a9b0b8" strokeWidth="1.600" /><path d="M1 4h23" stroke="#b8bec4" strokeWidth="4" /><rect x="6" y="9" width="13" height="8.500" fill="none" stroke="#6cb6e0" strokeWidth="1.500" /></>,
  <><path d="m12.500 12 12 6-12 6.500-12-6.500z" fill="#d8d8d8" /><path d="m12.500 7.500 12 6-12 6-12-6z" fill="#ef5c86" /><path d="m12.500 1 12 6.500-12 6.500-12-6.500z" fill="#6db79f" /></>,
  <path d="M2 1h6l3 3v8H2zM14 1h6l3 3v8h-9zM2 14h6l3 3v8H2zM14 14h6l3 3v8h-9z" fill="#62aae6" />,
  <><path d="M4 12a10 9.500 0 1 1 9.500 9.500" fill="none" stroke="#7f8c8d" strokeWidth="2.600" /><path d="M0 13h8l-4 4z" fill="#7f8c8d" /><circle cx="14" cy="12" r="5.500" fill="none" stroke="#e87f7f" strokeWidth="1.500" /><path d="M13.500 8.500V13h4" stroke="#5fa58a" strokeWidth="1.500" fill="none" /></>,
  <><path d="M0 2h25v16h-1v6l-7-6H0z" fill="#69b096" /><path d="M3 6h18M3 10h18M3 14h12" stroke="#e5f3ee" strokeWidth="1.400" /></>,
];

function Rail() {
  return (
    <div className="flex flex-1 flex-col items-center border-l-2 border-[#dddfe3] bg-white pt-6">
      <div className="flex flex-col gap-[45px]">
        {rail.map((r, i) => <svg key={i} width="25" height="25" viewBox="0 0 25 25">{r}</svg>)}
      </div>
      <svg className="mt-auto mr-px mb-[26px]" width="9" height="12" viewBox="0 0 9 12"><path d="m1 1 6.500 5L1 11" stroke="#444" strokeWidth="2" fill="none" /></svg>
    </div>
  );
}

/* ---------- taskbar ---------- */

function Taskbar() {
  return (
    <footer className={'flex h-[50px] bg-[linear-gradient(90deg,#3e382f_0,#413b31_540px,#292622_614px,#302d28_675px,#3f3b33_925px,#42403a_1047px,#27282a_1160px,#3a1b20_1270px,#3b1721_1560px,#301a20_1780px,#403c33_1900px)] ' + ui}>
      <div className="flex w-[60px] items-center justify-center">
        <svg width="20" height="20" viewBox="0 0 20 20" fill="#fff"><path d="M0 3l8-1.200V9.500H0zM9 1.600 20 0v9.500H9zM0 10.500h8v7.700L0 17zM9 10.500h11V20L9 18.400z" /></svg>
      </div>
      <div className="flex w-[430px] items-center border border-[#676767] bg-[#323232] pl-3.5">
        <svg width="21" height="21" viewBox="0 0 21 21" fill="none" stroke="#e5e5e5" strokeWidth="1.500"><circle cx="13.300" cy="7.500" r="6.500" /><path d="M8.500 12.300.7 20.300" /></svg>
        <Label w={163} className="ml-3.5 text-[18.500px] text-[#dcdcdc]">Type here to search</Label>
      </div>
      <div className="flex w-[60px] items-center justify-center"><span className="size-5 rounded-full border-[3px] border-white" /></div>
      <div className="flex w-16 items-center pl-5">
        <svg width="20" height="20" viewBox="0 0 20 20" fill="none" stroke="#fff" strokeWidth="1.300"><path d="M.7 0v3.500h12V0M.7 20v-3.500h12V20M.7 6h12v8H.7zM18.500 0v5M18.500 10.500V20" /><path d="M17 6.500h3v3h-3z" fill="#fff" stroke="none" /></svg>
      </div>
      <div className="flex w-[61px] items-center justify-center border-b-[3px] border-[#f99a9f] bg-[#5d5a58] pr-[3px]">
        <svg width="30" height="30" viewBox="0 0 30 30">
          <circle cx="15" cy="15" r="15" fill="#1673c9" />
          <path d="M1 11C4 3 10 0 15 0c9 0 15 6 15 13 0 5-4 7-8 7s-5-2-4-3c4-4 0-9-6-9-5 0-9 1-11 3z" fill="#36bcd9" />
          <path d="M21 1.500c6 3 9 7 9 11.500 0 5-4 7-8 7s-5-2-4-3c3-3 1.500-6-1-7.500z" fill="#57d584" opacity=".8" />
          <path d="M11 13c-3 6 1 14 8 15 4 .5 7-1.500 9.500-5-5 3-13 1-13-5 0-2 1-3 1.500-4-1-2-4-3-6-1z" fill="#0d4f9a" />
        </svg>
      </div>
      <div className="flex w-[61px] items-center justify-center">
        <svg width="29" height="26" viewBox="0 0 29 26"><path d="M0 0h12l2 3v4H0z" fill="#dc9a10" /><path d="M0 4h12l2-2h14.500v21H0z" fill="#ffd667" /><path d="M5.500 25V14c0-1 1-2 2-2h14c1 0 2 1 2 2v11h-5v-6h-8v6z" fill="#3a8ed4" /></svg>
      </div>
      <div className="flex w-[62px] items-center justify-center">
        <svg width="30" height="32" viewBox="0 0 30 32"><path d="M7.500 12V2h14v10" stroke="#d5d5d5" strokeWidth="2.600" fill="none" /><path d="M0 9h29.500v22H0z" fill="#f4f4f4" /><path d="M9 14h5.500v6H9z" fill="#f25022" /><path d="M15.500 14H21v6h-5.500z" fill="#7fba00" /><path d="M9 21h5.500v6H9z" fill="#00a4ef" /><path d="M15.500 21H21v6h-5.500z" fill="#ffb900" /></svg>
      </div>
      <div className="relative flex w-[68px] items-center pl-[17px]">
        <svg width="30" height="30" viewBox="0 0 30 30"><path d="M0 11 15 0l15 11v4H0z" fill="#0e5aa8" /><path d="M2 10h26L16 22z" fill="#f3f3f3" /><path d="M0 11l15 11L30 11v18H0z" fill="#2aa0e2" /><path d="M14 20 30 11v16z" fill="#52c5f5" /></svg>
        <span className="absolute top-6 left-[37px] flex size-[21px] items-center justify-center rounded-full border border-[#9a9a9a] bg-[#26313a]/80 text-[15px] text-white">1</span>
      </div>
      <div className="flex w-[51px] items-center justify-center border-b-[3px] border-[#f99a9f]">
        <svg width="24" height="30" viewBox="0 0 24 30"><path fillRule="evenodd" d="M12 0c-2 2-2 3-1.500 4.500C18 4 23 9 23 15.500c0 7-4 12-10.500 14.500 1.500-2 2-3 1.500-4.500C6.500 26 1 21 1 14.500 1 8 6 2 12 0zm0 10.500a4.500 4.500 0 1 0 0 9 4.500 4.500 0 0 0 0-9z" fill="#ec6030" /></svg>
      </div>
      <div className="ml-[7px] flex w-[61px] items-center border-b-[3px] border-[#ff7200] bg-[linear-gradient(90deg,#b36b2e_56px,#96531d_56px,#a45c22_58px)] pl-[15px]">
        <svg width="30" height="30" viewBox="0 0 30 30"><rect width="30" height="30" rx="4" fill="#00b900" /><path d="M15 4C8.500 4 3.500 8.300 3.500 13.700c0 4.900 4.300 8.600 9.500 9.400 1.500.3 1 2.200.9 3.400 5-2.500 12.600-7.200 12.600-12.800C26.500 8.300 21.500 4 15 4z" fill="#fff" /><text x="15" y="16.500" textAnchor="middle" fontSize="7" fontWeight="bold" fontFamily="Liberation Sans" fill="#00b900">LINE</text></svg>
      </div>
      <div className="flex w-[62px] items-center justify-center border-b-[3px] border-l border-b-[#ff7200] border-l-[#574232] bg-[#b46c2e]">
        <svg className="mt-[3px]" width="25" height="26" viewBox="0 0 25 26"><path d="M3 0h19c2 0 3 1 3 3v23l-5-3H3c-2 0-3-1-3-3V3c0-2 1-3 3-3z" fill="#6c7bc4" /><FaDiscord x="3" y="2.500" size={19} color="#fff" /></svg>
      </div>
      <div className="ml-auto flex items-center text-white">
        <svg width="16" height="9" viewBox="0 0 16 9"><path d="m1 8 7-7 7 7" stroke="#fff" strokeWidth="1.400" fill="none" /></svg>
        <svg className="ml-3" width="20" height="18" viewBox="0 0 20 18"><path d="M0 9c0-3 3-4 4-3 1-5 9-5 10-1l-9 8H3c-2 0-3-2-3-4z" fill="#ddd" /><path d="M6 12 14 5c3 0 5 2 5 5l-4 3z" fill="#9a9a9a" /><circle cx="14.500" cy="12.500" r="5.300" fill="#dd2231" /><path d="m12.500 10.500 4 4M16.500 10.500l-4 4" stroke="#fff" strokeWidth="1.300" /></svg>
        <svg className="ml-3" width="14" height="20" viewBox="0 0 14 20"><rect x="3" y="0" width="8" height="13" rx="2" fill="#fff" /><path d="M1 8v7h12V8M7 15v4M3 19h8" stroke="#fff" strokeWidth="1.400" fill="none" /></svg>
        <svg className="ml-[13px]" width="20" height="14" viewBox="0 0 20 14"><rect x="5.500" y="5" width="12" height="5" fill="#fff" stroke="#fff" /><path d="M4 2.500h14v10H5V8M19.500 5.500v4M1 1v3h4V1M3 4v3" stroke="#fff" fill="none" /></svg>
        <svg className="ml-3" width="17" height="16" viewBox="0 0 17 16" fill="none" stroke="#ddd" strokeWidth="1.200"><path d="M1 15C1 7 7 1.500 15 1.500M4.500 15C4.500 9 9 5 15 5M8 15c0-4 3-6.500 7-6.500M11.500 15c0-2 1.500-3 3.500-3" /><circle cx="15" cy="14" r="1" fill="#fff" /></svg>
        <svg className="ml-2.5" width="21" height="16" viewBox="0 0 21 16" fill="none" stroke="#eee" strokeWidth="1.200"><path d="M1 5h3l4-4v14l-4-4H1zM11 5.500c1 1.500 1 3.500 0 5M14 3.500c2 2.500 2 6.500 0 9" /><path d="M17 1.500c3 4 3 9 0 13" stroke="#777" /></svg>
        <Label w={29} className="ml-[14px] text-[15px]">ENG</Label>
        <div className="ml-[15px] flex w-[68px] flex-col items-center text-[15px] leading-[23px]">
          <Label w={52}>3:46 PM</Label>
          <Label w={68}>4/19/2021</Label>
        </div>
        <div className="relative mt-2 ml-[23px] h-[26px] w-[45px]">
          <svg width="21" height="20" viewBox="0 0 21 20"><path d="M0 0h21v15h-9l-4 4v-4H0z" fill="#fff" /><path d="M4 4h13M4 7.500h13M4 11h9" stroke="#333" strokeWidth="1.300" /></svg>
          <span className="absolute top-[9px] left-2.5 flex size-5 items-center justify-center rounded-full border border-[#999] bg-[#3c3634] text-[14px]">6</span>
        </div>
        <span className="h-[50px] w-px bg-[#767067]" />
        <span className="w-[5px]" />
      </div>
    </footer>
  );
}

export default function App() {
  return (
    <div className="flex h-[1080px] w-[1920px] flex-col overflow-hidden bg-[#fcfcfc]">
      <div className={'h-[129px] shrink-0 border-b-2 border-[#5b5b5b] bg-[#3b3b3b] ' + ui}>
        <TabStrip />
        <AddressRow />
        <BookmarkBar />
      </div>
      <AppHeader />
      <div className="flex h-[826px] shrink-0">
        <Sidebar />
        <div className="flex w-[9px] items-center justify-center gap-0.5 bg-[#fcfcfc] pl-0.5">
          <span className="h-[9px] w-px bg-[#555]" /><span className="h-[9px] w-px bg-[#555]" />
        </div>
        <Editor />
        <Rail />
      </div>
      <Taskbar />
    </div>
  );
}
